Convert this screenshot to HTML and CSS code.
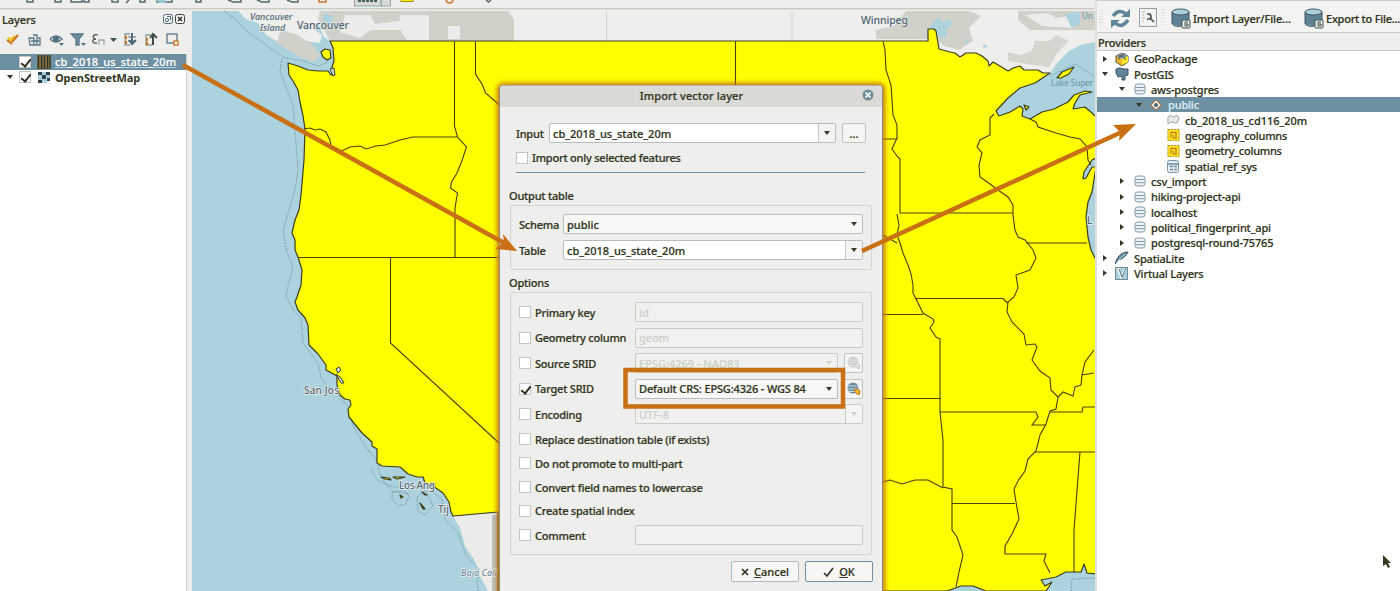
FILE: index.html
```html
<!DOCTYPE html>
<html lang="en">
<head>
<meta charset="utf-8">
<title>Import vector layer</title>
<link rel="stylesheet" href="styles.css">
</head>
<body>
<svg class="defs" width="0" height="0">
  <symbol id="db" viewBox="0 0 12 12"><rect x="1" y="1" width="10" height="10" rx="2.5" fill="#eef2f3" stroke="#7f99a6"/><path d="M1.500 4.500h9M1.500 7.700h9" stroke="#7f99a6"/></symbol>
  <symbol id="bigdb" viewBox="0 0 20 21"><path d="M1 4v11c0 4 17 4 17 0V4" fill="#5f8194"/><ellipse cx="9.500" cy="4" rx="8.500" ry="3" fill="#a9d0dc" stroke="#3c5560"/><path d="M1 4v11c0 4 9 3.500 9 3.500M18 4v8" fill="none" stroke="#3c5560"/><rect x="11" y="12" width="8" height="8" rx="1" fill="#eee" stroke="#3c5045"/><path d="M17 14h-3v4h3v-2h-2" fill="none" stroke="#3c5045"/></symbol>
  <symbol id="dots" viewBox="0 0 12 12"><rect width="12" height="12" fill="#f8e516"/><path d="M.5 .5h11v11H.5z" fill="none" stroke="#c2905e" stroke-dasharray="2 1"/><path d="M3.500 9V3.500h5V9H6V6" fill="none" stroke="#c98529" stroke-width="1.300"/></symbol>
  <symbol id="crs" viewBox="0 0 14 14"><circle cx="6" cy="6" r="5.500" fill="#6c8fa1"/><path d="M1 4h10M.5 7h11M2 9.500h6" stroke="#e5edf0" stroke-width=".8"/><path d="M7 8l3-1 3 2-1 4-3-2z" fill="#f4c12a" stroke="#c76c14"/></symbol>
</svg>
<div class="app">
  <div class="workspace">
    <div class="topbar">
      <svg width="1094" height="11" viewBox="0 0 1094 11">
        <g fill="none" stroke="#52696b" stroke-width="1.500">
          <path d="M27 0v2h6V0M55 0v2h6V0M71 0v2h11V0M84 0v2h5V0M112 0v2h6V0M129 0l-3 3M140 0v2h5V0M157 0v2h15V0M196 0v2h5V0M228 0l5 2h8V0M257 0l5 2h7V0M287 0l5 2h6V0M486 0l2.500 2 2.500-2"/>
          <path d="M319 0v2h7V0M446 -1q0 4 3.500 4t3.500-4" stroke="#c87a28"/>
        </g>
        <path d="M156 0h10v3h-7z" fill="#9cc8d6"/>
        <rect x="354.500" y="-2" width="36" height="8" fill="#d7dad5" stroke="#91a4aa"/><path d="M358 1h20" stroke="#4c5c58" stroke-width="2" stroke-dasharray="3 1"/><path d="M381 0v6" stroke="#6c8fa1"/>
        <rect x="401" y="-2" width="12" height="3.500" fill="#fff200" stroke="#a88b20"/>
        <path d="M0 8.500h1094" stroke="#c9cbc5"/><path d="M0 9.500h1094" stroke="#dedfda"/>
      </svg>
    </div>
    <div class="middle">
      <aside class="layers">
        <div class="panel-title"><span>Layers</span>
          <svg width="23" height="10" viewBox="0 0 23 10"><g fill="#f4f4f2" stroke="#4f6a76"><rect x=".5" y=".5" width="9" height="9" rx="2"/><rect x="12.500" y=".5" width="9" height="9" rx="2" stroke="#3c4036"/><circle cx="4" cy="6" r="1.600"/><path d="M4 2.500h3.500V6"/><path d="M15 3l4 4m0-4l-4 4" stroke="#2f3221" stroke-width="1.500"/></g></svg>
        </div>
        <svg class="tools" width="186" height="22" viewBox="0 29 186 22">
          <g fill="none" stroke="#567685" stroke-width="1.300">
            <path d="M8 38l3 2 4-4" stroke="#f0c52a" stroke-width="3"/><path d="M7 40l5 4M12 42l6-7" stroke="#cb701a" stroke-width="2"/>
            <path d="M29 38h5v7h-4zM33 35h4v10h-4M38 38h2v7h-2M31 41h8"/>
            <path d="M50 39q6-6 12 0-6 6-12 0"/><circle cx="56" cy="39" r="2.500" fill="#506a74"/><path d="M59 43h5l-2.500 3z" fill="#567685" stroke="none"/>
            <path d="M71 34h12l-4 5v6h-3v-6z" fill="#6c8fa1"/><path d="M81 43h5l-2.500 3z" fill="#567685" stroke="none"/>
            <path d="M98 35c-6-2-6 4-2 4-5 0-4 5 1 4" stroke="#4c5440"/><path d="M99 45v-5h5v5" stroke="#9aa8ab"/>
            <path d="M110 38h7l-3.500 4z" fill="#3b5058" stroke="none"/>
            <path d="M130 34h-5v11h5M128 37h8M128 41h8" stroke="#8b9aa0"/><path d="M126 36v3m0 2v3" stroke="#cb701a" stroke-width="2"/><path d="M132 33v10m-3-3l3 4 4-4" stroke="#4b6a79" stroke-width="2"/>
            <path d="M151 35h-5v10h6" stroke="#8b9aa0"/><path d="M147 38v3m0 1v3" stroke="#cb701a" stroke-width="2"/><path d="M153 45V35m-3 3l3-4 4 4" stroke="#3e4c45" stroke-width="2"/>
            <rect x="167" y="34" width="10" height="9"/><rect x="174" y="41" width="4" height="4" fill="#fff" stroke="#cb701a"/>
          </g>
        </svg>
        <div class="layer-list">
          <div class="layer selected"><i></i><b class="check on"></b>
            <svg width="14" height="14" viewBox="0 0 14 14"><rect width="14" height="14" fill="#6e6340"/><path d="M1.500 0v14M4.500 0v14M7.500 0v14M10.500 0v14M13 0v14" stroke="#24342f"/><path d="M3 0v14M9 0v14" stroke="#b0711f" stroke-dasharray="2 1"/></svg>
            <span class="link">cb_2018_us_state_20m</span></div>
          <div class="layer"><i class="open"></i><b class="check on"></b>
            <svg width="14" height="14" viewBox="0 0 14 14"><path d="M5 2h4v3H5zM9 5h4v3H9zM1 5h4v5H1zM5 9h5v4H5z" fill="#a8cfdb"/><path d="M1 2h4v3H1zM9 2h4v3H9zM5 5h4v4H5zM1 10h4v3H1zM10 8h3v3h-3z" fill="#2e4048"/></svg>
            <span class="strong">OpenStreetMap</span></div>
        </div>
      </aside>
      <main class="map">
        <svg width="903" height="580" viewBox="192 11 903 580">
          <rect x="192" y="11" width="903" height="580" fill="#abd2dd"/>
          <path d="M238 11l8 8 12 4 8 12 14 8 4-6-6-10 12 6 14 8 16 2 2-8-8-6 4-6 6 14 6 4H1095V11z" fill="#eeeeec"/>
          <path d="M925 38h170v5l-20 7-12 7-6 12-6 6h-60l-65-20z" fill="#eeeeec"/>
          <path d="M320 11h188l6 8v22H330l-12-22zM280 31l16 3 16 10 8 11-6 7-14-5-14-8-9-6zM876 30l18-4 12-15h63l12 5-12 12 4 13-14 9-15-4-9-7h-59zM1018 11h77v19h-65l-12-10z" fill="#d0d2ca"/>
          <path d="M1008 52l12 3 12-4 3-10 14 0 8-6 12 6-12 12-8 14-16-2-25-4z" fill="#d5d7cf"/>
          <path d="M345 15h25l5 9 25-3v9h-30l-10 8-20-6zM400 15h29v25h-22l-8-12zM448 26h12v13h-12zM1025 15l22-2 10 5 12-2 3 12-30-2z" fill="#ececea"/>
          <path d="M933 23l6-6 4 6 7-4 2 6-6 5 1 6-7 2-5-8-9 2zM1065 14l15-2v12l-9 3zM324 13l10 4-4 8-7-5zM984 44l4 3-5 1zM966 39l4 3-4 1z" fill="#abd2dd"/>
          <path d="M606.500 11v30M792 11v30" stroke="#d2d4cd"/>
          <path d="M1050 73l7-10 12-12 12-6 14-3v78h-60l-42-4z" fill="#abd2dd"/>
          <path d="M453 516l45-3v78h-10l-8-15-5-15-10-15-5-18z" fill="#ebebe9"/><path d="M492 515h6v76h-6z" fill="#b9c4c4"/>
          <g class="boundary">
            <path d="M224 11l12 9 10 11 19 13 18 13 20 4 15 5 10-4 2-10M282 58l-2 13 5 14 8 20 2 25 3 40-3 20-9 30-3 12 4 20 6 15-6 23-1 7 8 14 7 7 2 25 15 20 3 14 5 8 12 10 13 15 2 16 12 20 12 15 3 14 5 8 7 8 18 3M371 469l6 11 16 7 27 0M392 493l11-3 6 6-3 8-8 2-6-6zM417 497l8-7 5 9 3 7-8 9-7-4zM430 490l12 9 3 20 13 14 8 22 13 14-2 15 3 14"/>
            <path d="M1050 76l25-12 20 13M1071 591l1-12 23-1"/>
          </g>
          <path class="states" d="M330 41H928V29h6l2 2 3 18 11 3 5 1 5 4 6-4h10l6 3 6 5 1 5 4-4 7 4 8 5 5-3 7-2 4 4h14l5 3h7l-15 10-15 5-12 10-12 13 3 5 11-4 10-6 3 3-1 7 8 3 12-7 12-3 14-7 6-7 11-4 7 1-12 3-5 8-2 6 12-2 7 6 4 4v41l-4 2-8 12-1 7 3-1 6-11 4 0-4 25-4 10-2 15 2 20 3 13 5 10V574l-9-1-3-9-3 8h-15l-10 5-15 3 4 6 7-4-6 9h-60l-13-5h-12l-14 5H498V512l-45 4-2-4-2-10-6-9-10-7-8-3-2-6h-6l-9-3-8-7-18-1-5-3v-14l-5-3v-4l-10-9-13-16-1-8 3-4-1-5-5-1-5-4-3-10v-9l-11-6v-5l-8-11-9-9-1-20-3-7-7-8-3-8 2-5 4-12 1-15-4-13-3-7v-10l-3-7 3-13 4-10 2-15 3-35 1-31-2-13-3-14-2-12-5-9-4-6-1-12 10 3 10 4 10 1 10 0 3 4 2-2-1-6 2-6-1-13-2-5z"/>
          <path class="states" d="M321 52l4-3 5 1 1 8-4 2-4-3zM381 477l8 1 2 2-6-1zM393 477l12 0-8 2zM400 495l3 2-2 1zM422 492l5 3-2 0zM420 503l5 6-2 0zM1057 78l5-6 12-5-5 7-8 4zM1024 105l5 2-3 3z"/>
          <g class="lines">
            <path d="M304 129l6-1 5 2 5-1 6 3 4 8 1 6 11 5 8-4 10-1 6 3 10-3 9-1 15-5 13-3h44M454.500 41v85l3 11 9 10-5 15-5 12-5 8-1 6 7 5-2.500 15v50M299 257.500h200M390.500 258v85L499 443M475.500 41v33l7 11 3 8 14 12M735.500 41v44"/>
            <path d="M883 41l2 9 1 20 5 15 2 30 4 10v14h-14M897 138l-5 11 5 7 3 3v54h113M897 214l2 11-2 10 3 8 3 10 5 12 3 9 2 11v8l3 6 7 14 10 6 1 3-4 6 6 9 4 2v73l3 28v47l9 2v41l5 7 6 18-4 17-3 15M883 235l14 8"/>
            <path d="M994 114l-4 4v17l-10 5-3 7 5 6-3 12 1 12 10 7 8 6 10 7 5 8v10l2 15 3 7 7 3 8 10 3 8-6 12-14 5 2 13-4 9-6 5-1 10 5 10 12 12 2 11 9-1 2 3-5 13 8 11 10 7 1 12 7 7-2 12-6 2-4 13-6 11-4 16-8 8-3 12-7 10-4 8 2 13 3 17-7 15-7 12v8h41l-2 7 6 12"/>
            <path d="M1026 243h61M1030 119l6 3 2 5 18 6 14 4 10 2 7 8 1 13 3 5M916 298.500h87l5 5M883 314.500h40M883 398.500h57M940 412h96l2 5-6 8h14M1058 397l5-5 10 4 2-9 6-2 1-10 12-2M1082 375l3-13 9-12M1050 412h32l1-5h12M1035 452h60M1080 452l-6 78v42M952 503.500h63M883 482l7-2 12 4 13-4h13l15 8"/>
          </g>
          <path d="M336 369l3-2 2 3-3 3zM336 374l5 4 3 5-3 0zM330 69l4-1 1 7-2 1z" fill="#c9dbd8" stroke="#3c4036"/>
          <g class="labels">
            <text x="250" y="20" class="it">Vancouver</text><text x="260" y="31" class="it">Island</text>
            <text x="297" y="29" class="city" textLength="52">Vancouver</text><text x="861" y="23.500" class="city" textLength="47">Winnipeg</text>
            <text x="304" y="394" textLength="35">San Jos</text><text x="399" y="489" textLength="36">Los Ang</text><text x="438" y="513">Tij</text>
            <text x="461" y="576" class="it pale" textLength="36">Baja Cali</text><text x="1051" y="86" class="lake" textLength="42">Lake Super</text><text x="1082" y="19" class="lake">Un</text><text x="1087" y="224">L</text>
          </g>
        </svg>
      </main>
    </div>
  </div>
  <aside class="browser">
    <div class="actions">
      <svg width="35" height="22" viewBox="0 0 35 22"><path d="M1 3v16M3.500 3v16" stroke="#c8cac4" stroke-dasharray="1 2"/><g fill="none" stroke="#608598" stroke-width="3.500"><path d="M14 9q6-8 13-2M29 13q-6 9-13 3"/></g><path d="M22 10h9V2zM21 13h-9v8z" fill="#608598"/></svg>
      <svg class="search" width="19" height="20" viewBox="0 0 19 20"><rect x=".5" y=".5" width="17" height="18" fill="#f4f4f2" stroke="#93a1a7"/><path d="M3 4h3M3 7h2M3 10h3M3 13h2" stroke="#aab4b6"/><path d="M8 6h3q2 3 0 5H8M11 10l4 4" fill="none" stroke="#44534d" stroke-width="1.700"/></svg>
      <svg class="sep" width="6" height="22"><path d="M2 2v18M4 2v18" stroke="#cfd1cc" stroke-dasharray="1 2"/></svg>
      <svg width="20" height="21"><use href="#bigdb"/></svg><span class="import">Import Layer/File...</span>
      <svg width="20" height="21"><use href="#bigdb"/></svg><span class="export">Export to File...</span>
    </div>
    <div class="providers">Providers</div>
    <div class="tree">
      <div class="row l0"><i></i><svg width="14" height="14" viewBox="0 0 14 14"><path d="M1 4l6-3 6 3v6l-6 4-6-4z" fill="#f5b72a" stroke="#554d2c"/><path d="M1 4l6 3 6-3-6-3z" fill="#7d9faf"/><path d="M7 7v6l6-3V4z" fill="#ffe92b"/><path d="M4 3l6 3v2M10 2L4 5v3" fill="none" stroke="#45585e"/></svg><span>GeoPackage</span></div>
      <div class="row l0"><i class="open"></i><svg width="14" height="14" viewBox="0 0 14 14"><path d="M1 2l4-1 4 1 4 0v6l-3 1v4H7V9l-4 1-2-4z" fill="#638498" stroke="#3c5663"/></svg><span>PostGIS</span></div>
      <div class="row l1"><i class="open"></i><svg width="12" height="12"><use href="#db"/></svg><span>aws-postgres</span></div>
      <div class="row l2 selected"><i class="open"></i><svg width="12" height="12" viewBox="0 0 12 12"><path d="M5 1l5 5-5 5-5-5z" fill="#e9eceb" stroke="#c4712a"/><circle cx="5" cy="6" r="2" fill="#4f6873"/></svg><span>public</span></div>
      <div class="row l3 wide"><svg width="14" height="12" viewBox="0 0 14 12"><path d="M1 3l3-2 3 2 4-2 2 3-2 5H8L5 8l-4 2z" fill="#e8ebeb" stroke="#8f9da3"/></svg><span>cb_2018_us_cd116_20m</span></div>
      <div class="row l3"><svg width="13" height="12"><use href="#dots"/></svg><span>geography_columns</span></div>
      <div class="row l3"><svg width="13" height="12"><use href="#dots"/></svg><span>geometry_columns</span></div>
      <div class="row l3"><svg width="13" height="13" viewBox="0 0 13 13"><rect x=".5" y=".5" width="11" height="12" rx="2" fill="#e4edf1" stroke="#7894a2"/><path d="M1 4h11M3 6.500h3M7 6.500h3M3 9.500h3M7 9.500h3" stroke="#6e8b9a" stroke-width="1.300"/></svg><span>spatial_ref_sys</span></div>
      <div class="row l1"><i></i><svg width="12" height="12"><use href="#db"/></svg><span>csv_import</span></div>
      <div class="row l1"><i></i><svg width="12" height="12"><use href="#db"/></svg><span>hiking-project-api</span></div>
      <div class="row l1"><i></i><svg width="12" height="12"><use href="#db"/></svg><span>localhost</span></div>
      <div class="row l1"><i></i><svg width="12" height="12"><use href="#db"/></svg><span>political_fingerprint_api</span></div>
      <div class="row l1"><i></i><svg width="12" height="12"><use href="#db"/></svg><span>postgresql-round-75765</span></div>
      <div class="row l0"><i></i><svg width="14" height="14" viewBox="0 0 14 14"><path d="M0 13C2 6 6 1 13 1c-2 4-5 7-10 8z" fill="#6b93a8" stroke="#3c5058"/><path d="M2 11l8-8" stroke="#b7d6df"/></svg><span>SpatiaLite</span></div>
      <div class="row l0"><i></i><svg width="14" height="13" viewBox="0 0 14 13"><rect x=".5" y=".5" width="12" height="12" fill="#a8cfdb" stroke="#6b8b99"/><path d="M3 2l3 8 5-9M2 3l3-1" stroke="#f5f8f8" stroke-width="2" fill="none"/><path d="M4 2l3 8 4-9" stroke="#537482" fill="none"/></svg><span>Virtual Layers</span></div>
    </div>
  </aside>
</div>

<section class="dialog">
  <header><span>Import vector layer</span><svg width="12" height="12" viewBox="0 0 12 12"><circle cx="6" cy="6" r="5.500" fill="#718c99"/><path d="M3.500 3.500l5 5m0-5l-5 5" stroke="#eceeec" stroke-width="1.800"/></svg></header>
  <div class="source">
    <div class="field input-row"><label>Input</label><div class="box edit"><span>cb_2018_us_state_20m</span><u></u></div><button class="more">...</button></div>
    <div class="field only"><b class="check"></b><label>Import only selected features</label></div>
  </div>
  <h2>Output table</h2>
  <div class="group output">
    <div class="field"><label>Schema</label><div class="box combo"><span>public</span><u></u></div></div>
    <div class="field"><label>Table</label><div class="box edit"><span>cb_2018_us_state_20m</span><u></u></div></div>
  </div>
  <h2 class="opt-title">Options</h2>
  <div class="group options">
    <div class="opt"><b class="check"></b><label>Primary key</label><div class="box off"><span>id</span></div></div>
    <div class="opt"><b class="check"></b><label>Geometry column</label><div class="box off"><span>geom</span></div></div>
    <div class="opt"><b class="check"></b><label>Source SRID</label><div class="box off combo"><span>EPSG:4269 - NAD83</span><u></u></div><button class="crs faded"><svg width="14" height="14"><use href="#crs"/></svg></button></div>
    <div class="opt"><b class="check on"></b><label>Target SRID</label><div class="box combo target"><span>Default CRS: EPSG:4326 - WGS 84</span><u></u></div><button class="crs"><svg width="14" height="14"><use href="#crs"/></svg></button></div>
    <div class="opt"><b class="check"></b><label>Encoding</label><div class="box off edit"><span>UTF-8</span><u></u></div></div>
    <div class="opt short"><b class="check"></b><label>Replace destination table (if exists)</label></div>
    <div class="opt short"><b class="check"></b><label>Do not promote to multi-part</label></div>
    <div class="opt short"><b class="check"></b><label>Convert field names to lowercase</label></div>
    <div class="opt short"><b class="check"></b><label>Create spatial index</label></div>
    <div class="opt"><b class="check"></b><label>Comment</label><div class="box off"></div></div>
  </div>
  <footer>
    <button><svg width="8" height="8" viewBox="0 0 8 8"><path d="M1 1l6 6m0-6L1 7" stroke="#2f3221" stroke-width="1.700"/></svg><span><em>C</em>ancel</span></button>
    <button class="ok"><svg width="11" height="10" viewBox="0 0 11 10"><path d="M1 6l3 3 6-8" fill="none" stroke="#2f3221" stroke-width="1.600"/></svg><span><em>O</em>K</span></button>
  </footer>
</section>

<svg class="annotations" width="1400" height="591" viewBox="0 0 1400 591">
  <g fill="none" stroke="#c96f14">
    <path d="M183 65L506 244M862 251L1124 131" stroke-width="4.500"/>
    <rect x="625.500" y="370" width="217.500" height="36.500" stroke-width="4.500"/>
  </g>
  <path d="M517 251l-14-17 1 8-9 7zM1136 124l-23 1 7 7-1 9z" fill="#c96f14"/>
  <path d="M1383 555v11l3-2 2 4 2-1-2-4h3z" fill="#333a20"/>
</svg>
</body>
</html>
```
FILE: styles.css
```css
* { box-sizing: border-box; }
body {
  margin: 0;
  width: 1400px;
  height: 591px;
  overflow: hidden;
  position: relative;
  background: #fff;
  color: #303520;
  font: 500 11px/15px "Noto Sans", sans-serif;
  -webkit-text-stroke: .2px;
}
.defs { position: absolute; }
.app { display: flex; height: 591px; }
.workspace { width: 1095px; flex: none; display: flex; flex-direction: column; }
.topbar { height: 11px; background: #eeeeec; }
.topbar svg { display: block; }
.middle { display: flex; flex: 1; }

.layers { width: 192px; flex: none; display: flex; flex-direction: column; background: #eeeeec; }
.panel-title { display: flex; align-items: center; justify-content: space-between; height: 16px; padding: 0 6px 0 2px; letter-spacing: -.1px; }
.tools { display: block; margin-top: 2px; }
.layer-list { flex: 1; width: 187px; margin-top: 3px; background: #fff; border-right: 1px solid #cfd1cb; }
.layer { display: flex; align-items: center; height: 15.5px; padding-left: 5px; white-space: nowrap; }
.layer.selected { background: #6c8fa1; color: #fff; }
.layer .check { margin: 0 6px 0 5px; }
.layer svg { margin-right: 4px; }
.link { text-decoration: underline; text-decoration-color: #abd2dd; letter-spacing: .16px; }
.strong { font-weight: 700; letter-spacing: -.12px; -webkit-text-stroke: 0; }

i { width: 9px; height: 9px; flex: none; display: flex; align-items: center; justify-content: center; }
.open::before { content: ""; border: 3px solid transparent; border-top: 4px solid #333a26; border-bottom: 0; }
.row i:not(.open)::before { content: ""; border: 3px solid transparent; border-left: 4px solid #333a26; border-right: 0; }

.check { width: 12px; height: 12px; flex: none; background: #fff; border: 1px solid #c4c7c1; position: relative; }
.check.on::after { content: ""; position: absolute; left: 3px; top: 0; width: 4px; height: 8px; border: solid #2f3221; border-width: 0 2px 2px 0; transform: rotate(38deg); }

.map svg { display: block; }
.boundary { fill: none; stroke: #7597a8; stroke-width: .8; stroke-dasharray: 2 1; }
.states { fill: #ff0; stroke: #3c3d20; stroke-width: 1.2; stroke-linejoin: round; }
.lines { fill: none; stroke: #4a4015; stroke-width: 1.1; }
.labels { font-size: 10px; fill: #4d6470; paint-order: stroke; }
.labels text { stroke: #eef0ee; stroke-width: 1.5px; }
.labels .it { font-style: italic; font-size: 9px; }
.labels .city { font-size: 10.5px; stroke-width: 1px; }
.labels .pale { fill: #6e91a2; }
.labels .lake { fill: #7199ab; font-size: 8px; stroke: none; }

.browser { flex: 1; min-width: 0; overflow: hidden; background: #fff; border-left: 2px solid #dfe0dc; letter-spacing: -.17px; }
.actions { display: flex; align-items: center; height: 33px; padding: 3px 0 0 2px; background: #f3f3f1; border-top: 1px solid #ccc; border-bottom: 1px solid #c9cbc5; white-space: nowrap; letter-spacing: -.1px; }
.actions svg { flex: none; }
.search { margin-left: 5px; }
.sep { margin: 0 5px 0 2px; }
.import { width: 113px; flex: none; padding-left: 2px; }
.export { padding-left: 2px; letter-spacing: -.25px; }
.providers { height: 18px; padding: 2px 0 0 1px; background: #eeeeec; border-bottom: 1px solid #c9cbc5; }
.row { display: flex; align-items: center; height: 15.35px; padding-left: 3px; white-space: nowrap; }
.row svg { flex: none; margin: 0 5px 0 6px; }
.l1 { padding-left: 20px; }
.l1 svg { margin-left: 8px; }
.l2 { padding-left: 37px; }
.l2 svg { margin-left: 8px; }
.l3 { padding-left: 64px; letter-spacing: -.25px; }
.l3 svg { width: 13px; }
.wide { letter-spacing: -.03px; }
.row.selected { background: #6c8fa1; color: #d9edf2; }

.dialog { position: absolute; left: 499px; top: 85px; width: 384px; height: 520px; display: flex; flex-direction: column; background: #eeeeec; border: 1px solid #8a8b7d; border-top-color: #b4b5aa; border-radius: 4px 4px 0 0; box-shadow: 0 0 5px 2px #c96f14; }
.dialog header { display: flex; align-items: center; height: 21px; padding: 0 8px 3px 21px; background: #dadbd6; border-radius: 4px 4px 0 0; }
.dialog header span { flex: 1; text-align: center; padding-top: 1px; letter-spacing: .1px; }
.source { height: 66px; margin: 0 17px 0 16px; padding-top: 16px; border-bottom: 1px solid #6c8fa1; }
.dialog label, h2 { letter-spacing: -.22px; }
.field { display: flex; align-items: center; height: 20px; }
.field label { flex: none; }
.input-row label { width: 33px; }
.input-row .box { flex: 1; margin-right: 1px; }
.more, .crs { display: flex; align-items: center; justify-content: center; flex: none; padding: 0; background: #f5f5f3; border: 1px solid #c0c4bf; border-radius: 2px; color: inherit; font: inherit; }
.more { width: 24px; height: 20px; margin: 0 -1px 0 5px; }
.only { height: 29px; gap: 4px; }

.box { display: flex; align-items: center; height: 20px; min-width: 0; padding-left: 3px; background: #fff; border: 1px solid #b5bdbd; border-radius: 2px; white-space: nowrap; }
.box span { flex: 1; }
.box.combo { background: #f7f7f6; }
.box u { align-self: stretch; width: 17px; display: flex; align-items: center; justify-content: center; }
.box u::before { content: ""; border: 3.5px solid transparent; border-top: 4px solid #333a26; border-bottom: 0; }
.edit u { border-left: 1px solid #c5c9c4; background: #f4f4f2; }
.box.off { background: #f1f1ef; border-color: #c9cbc6; color: #cfd1cc; }
.off u::before { border-top-color: #cfd1cc; }

h2 { margin: 15px 0 0 9px; font: inherit; line-height: 15px; }
.group { margin: 2px 10px 0; border: 1px solid #d3d5cf; border-radius: 2px; }
.output { height: 65px; padding: 8px 9px 0 8px; display: flex; flex-direction: column; gap: 6px; }
.output label { width: 44px; }
.output .box { flex: 1; margin-right: -1px; }
.opt-title { margin-top: 5px; }
.options { height: 263px; padding: 9px 8px 0 8px; }
.opt { display: flex; align-items: center; height: 25.6px; padding-bottom: 5.6px; }
.opt label { margin-left: 4px; flex: none; width: 100px; white-space: nowrap; }
.opt .box { flex: 1; }
.opt.short { height: 23.8px; padding-bottom: 4.8px; }
.crs { width: 19px; height: 20px; margin-left: 6px; }
.faded svg { filter: grayscale(1); opacity: .35; }
.target { letter-spacing: -.15px; }
footer { display: flex; justify-content: flex-end; gap: 6px; margin: 6px 9px 0; }
footer button { display: flex; align-items: center; justify-content: center; gap: 5px; width: 68px; height: 21px; padding: 0; background: #f6f6f4; border: 1px solid #aebabd; border-radius: 2px; color: inherit; font: inherit; }
footer .ok { border: 1.5px solid #6c8fa1; }
footer em { font-style: normal; text-decoration: underline; }

.annotations { position: absolute; left: 0; top: 0; pointer-events: none; }
```
